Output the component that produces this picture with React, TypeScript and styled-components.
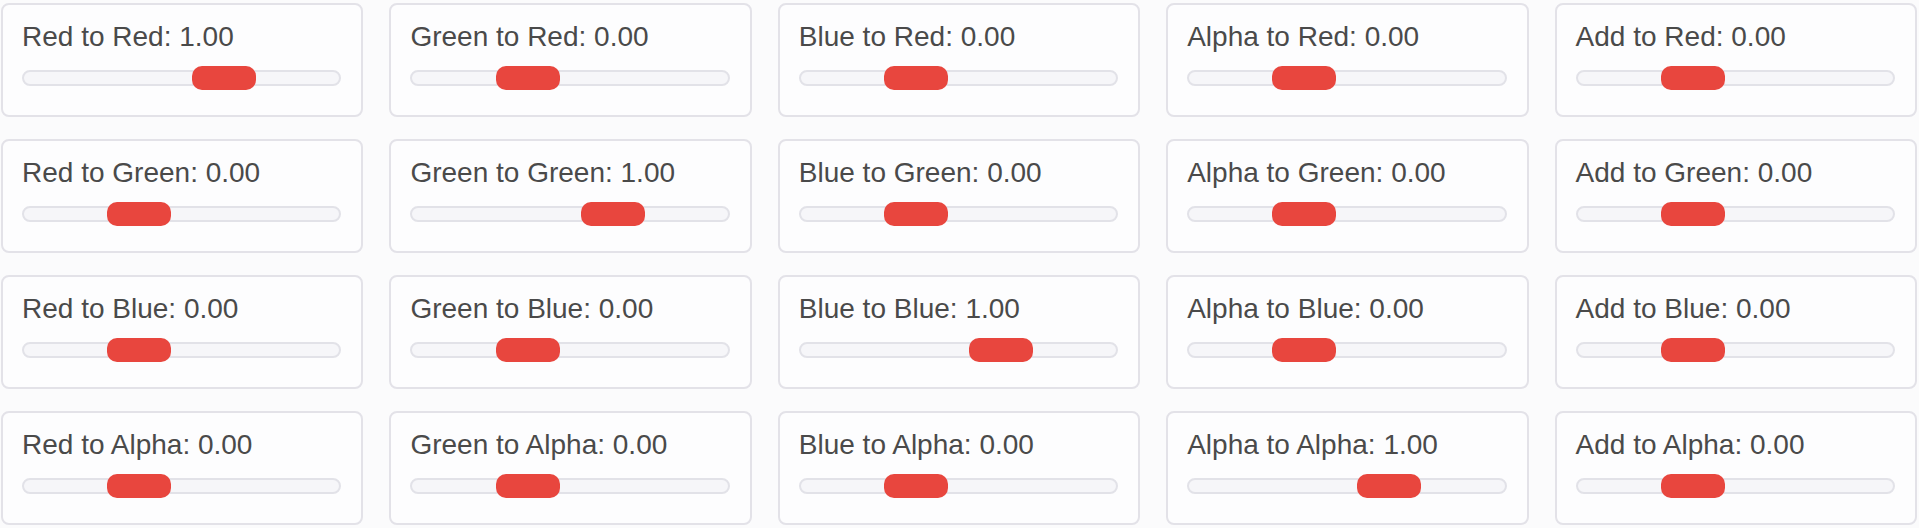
import * as React from 'react';
import styled, { createGlobalStyle } from 'styled-components';

const GlobalStyle = createGlobalStyle`
  html, body {
    margin: 0;
    padding: 0;
    background: #fbfbfc;
  }
  body {
    font-family: 'Liberation Sans', Arial, sans-serif;
  }
`;

const Grid = styled.div`
  display: grid;
  grid-template-columns: repeat(5, 1fr);
  column-gap: 26px;
  row-gap: 22px;
  width: 1916px;
  padding: 3px 0 0 1px;
`;

const Card = styled.div`
  box-sizing: border-box;
  height: 114px;
  padding: 16px 20px 25px 19px;
  border: 2px solid #e3e2e8;
  border-radius: 8px;
  background: #fdfdfe;
`;

const Label = styled.div`
  font-size: 28px;
  line-height: 32px;
  color: #4a4a4a;
  white-space: nowrap;
`;

const SliderBox = styled.div`
  position: relative;
  height: 24px;
  margin-top: 13px;
  display: flex;
  align-items: center;
`;

const Track = styled.div`
  box-sizing: border-box;
  width: 100%;
  height: 16px;
  border: 2px solid #e2e2e8;
  border-radius: 8px;
  background: #f6f6f9;
`;

const Thumb = styled.div`
  position: absolute;
  top: 0;
  width: 64px;
  height: 24px;
  border-radius: 10px;
  background: #e8463e;
`;

const MIN = -1;
const MAX = 2;

const Slider = ({ value }: { value: number }) => {
  const t = (value - MIN) / (MAX - MIN);
  return (
    <SliderBox>
      <Track />
      <Thumb style={{ left: `calc((100% - 64px) * ${t})` }} />
    </SliderBox>
  );
};

const targets = ['Red', 'Green', 'Blue', 'Alpha'];
const sources = ['Red', 'Green', 'Blue', 'Alpha', 'Add'];

const App = () => {
  return (
    <>
      <GlobalStyle />
      <Grid>
        {targets.map((to, r) =>
          sources.map((from, c) => {
            const value = c === r ? 1 : 0;
            return (
              <Card key={`${from}-${to}`}>
                <Label>
                  {from} to {to}: {value.toFixed(2)}
                </Label>
                <Slider value={value} />
              </Card>
            );
          })
        )}
      </Grid>
    </>
  );
};

export default App;
